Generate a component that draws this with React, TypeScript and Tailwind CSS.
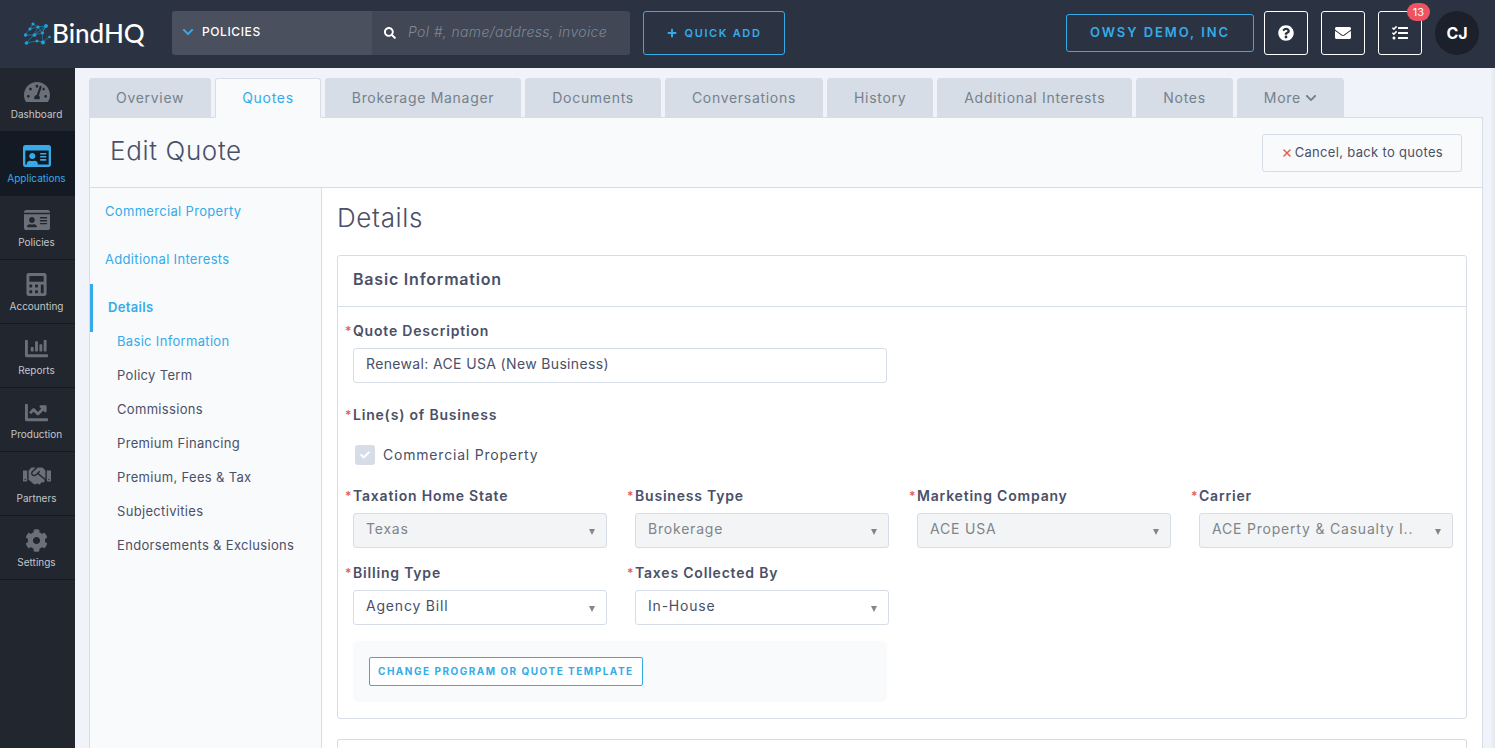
import type { ReactNode } from "react";
import { X } from "lucide-react";
import {
  FaCalculator,
  FaChartBar,
  FaChartLine,
  FaCheck,
  FaChevronDown,
  FaCog,
  FaEnvelope,
  FaHandshake,
  FaIdCard,
  FaPlus,
  FaQuestionCircle,
  FaRegIdCard,
  FaSearch,
  FaTachometerAlt,
  FaTasks,
} from "react-icons/fa";

const sideItems = [
  { label: "Dashboard", icon: FaTachometerAlt, size: "size-[26px]" },
  { label: "Applications", icon: FaRegIdCard, size: "size-7", active: true },
  { label: "Policies", icon: FaIdCard, size: "size-[26px]" },
  { label: "Accounting", icon: FaCalculator, size: "size-[23px]" },
  { label: "Reports", icon: FaChartBar, size: "size-[23px]" },
  { label: "Production", icon: FaChartLine, size: "size-[23px]" },
  { label: "Partners", icon: FaHandshake, size: "size-7" },
  { label: "Settings", icon: FaCog, size: "size-[23px]" },
];

const tabs = [
  "Overview",
  "Quotes",
  "Brokerage Manager",
  "Documents",
  "Conversations",
  "History",
  "Additional Interests",
  "Notes",
  "More",
];

const detailLinks = [
  "Basic Information",
  "Policy Term",
  "Commissions",
  "Premium Financing",
  "Premium, Fees & Tax",
  "Subjectivities",
  "Endorsements & Exclusions",
];

const selects = [
  { id: "state", label: "Taxation Home State", value: "Texas", disabled: true },
  { id: "businessType", label: "Business Type", value: "Brokerage", disabled: true },
  { id: "marketing", label: "Marketing Company", value: "ACE USA", disabled: true },
  { id: "carrier", label: "Carrier", value: "ACE Property & Casualty I..", disabled: true },
  { id: "billing", label: "Billing Type", value: "Agency Bill", disabled: false },
  { id: "taxes", label: "Taxes Collected By", value: "In-House", disabled: false },
];

const Logo = () => (
  <a href="#" className="flex w-[172px] shrink-0 items-center pl-6 text-white">
    <svg width="28" height="24" viewBox="0 0 28 24" stroke="#1ca4dc" strokeWidth="0.5" fill="#1ca4dc">
      <path
        fill="none"
        d="M1 14 6 8 9 3 14 6 22 5 18 12 10 14 1 14M2 22 10 14 14 6 18 12 19 21 13 20 2 22M6 8 14 6M10 14 22 5M18 12 22 5M19 21 25 16"
      />
      <circle cx="1.5" cy="14" r="1.5" />
      <circle cx="2.5" cy="22" r="1.5" />
      <circle cx="6" cy="8" r="1.3" />
      <circle cx="9" cy="3" r="1.3" />
      <circle cx="14" cy="6" r="1.3" />
      <circle cx="10.5" cy="14" r="1.6" />
      <circle cx="13" cy="20" r="1.2" />
      <circle cx="19" cy="21.5" r="1.8" />
      <circle cx="18.5" cy="12" r="1.3" />
      <circle cx="22" cy="5" r="1.7" />
      <circle cx="25.5" cy="16" r="1.1" />
    </svg>
    <span className="font-['Lato',sans-serif] text-[26px] leading-8 font-medium">BindHQ</span>
  </a>
);

const Header = () => (
  <header className="flex h-[68px] items-center bg-[#2b3342] pr-4 pb-0.5">
    <Logo />
    <div className="flex h-11 overflow-hidden rounded-[3px]">
      <button className="flex w-[200px] items-center gap-2 bg-[#4a505e] px-2.5 pb-0.5 text-xs font-medium tracking-wider text-white">
        <FaChevronDown className="size-3 text-[#35abe9]" />
        POLICIES
      </button>
      <div className="flex w-[258px] items-center gap-3 bg-[#414754] pl-3">
        <FaSearch className="size-3 text-white" />
        <input
          aria-label="Search"
          placeholder="Pol #, name/address, invoice"
          className="min-w-0 flex-1 bg-transparent pb-0.5 text-sm font-light tracking-wide italic outline-none placeholder:text-[#7f8794]"
        />
      </div>
    </div>
    <button className="ml-[13px] flex h-11 w-[142px] items-center justify-center gap-2 rounded-[3px] border border-[#35abe9] text-[11px] font-semibold tracking-[0.15em] text-[#35abe9]">
      <FaPlus className="size-2.5" />
      QUICK ADD
    </button>
    <div className="ml-auto flex items-center">
      <button className="h-[38px] w-[188px] rounded-[3px] border border-[#35abe9] text-[13px] font-semibold tracking-[0.15em] text-[#35abe9]">
        OWSY DEMO, INC
      </button>
      <div className="ml-2.5 flex gap-[13px]">
        <HeaderButton label="Help">
          <FaQuestionCircle />
        </HeaderButton>
        <HeaderButton label="Messages">
          <FaEnvelope />
        </HeaderButton>
        <HeaderButton label="Tasks">
          <FaTasks />
          <span className="absolute -top-[9px] -right-[9px] flex h-[18px] w-[23px] items-center justify-center rounded-full bg-[#ef5261] text-[11px]">
            13
          </span>
        </HeaderButton>
        <button className="size-11 rounded-full bg-[#1b202a] text-base font-bold text-white">CJ</button>
      </div>
    </div>
  </header>
);

const HeaderButton = ({ label, children }: { label: string; children: ReactNode }) => (
  <button
    aria-label={label}
    className="relative flex size-11 items-center justify-center rounded-[3px] border border-white text-base text-white"
  >
    {children}
  </button>
);

const Sidebar = () => (
  <nav className="w-[75px] shrink-0 bg-[#22272f]">
    {sideItems.map(({ label, icon: Icon, size, active }) => (
      <a
        key={label}
        href="#"
        className={`flex h-16 flex-col items-center border-b border-[#151b26] pt-2.5 pr-0.5 text-[10px] leading-4 ${
          active ? "bg-[#141a24] text-[#35abe9]" : "text-[#c3c6cb]"
        }`}
      >
        <span className={`flex h-7 items-center ${active ? "" : "text-[#6b6f78]"}`}>
          <Icon className={size} />
        </span>
        {label}
      </a>
    ))}
  </nav>
);

const Tabs = () => (
  <div className="flex gap-1">
    {tabs.map((tab) => (
      <a
        key={tab}
        href="#"
        className={`flex h-10 items-center gap-1 rounded-t-[3px] border px-[26px] text-sm tracking-wider whitespace-nowrap ${
          tab === "Quotes"
            ? "relative border-[#d6dde6] border-b-[#f9fafc] bg-[#f9fafc] text-[#35abe9]"
            : "border-[#d6dde6] bg-[#d6dde6] text-[#75818d]"
        }`}
      >
        {tab}
        {tab === "More" && <FaChevronDown className="size-3" />}
      </a>
    ))}
  </div>
);

const Required = () => <span className="absolute -left-2 text-xs leading-5 text-[#e2604a]">*</span>;

const QuoteNav = () => (
  <aside className="w-[232px] shrink-0 border-r border-[#d6dde6] bg-[#f9fafc] text-[13px] tracking-wide">
    <a href="#" className="flex h-12 items-center px-[15px] text-[#35abe9]">
      Commercial Property
    </a>
    <a href="#" className="flex h-12 items-center px-[15px] text-[#35abe9]">
      Additional Interests
    </a>
    <a href="#" className="flex h-12 items-center border-l-[3px] border-[#35abe9] px-[15px] font-semibold text-[#35abe9]">
      Details
    </a>
    <div className="flex flex-col gap-4 pl-[27px]">
      {detailLinks.map((link, i) => (
        <a key={link} href="#" className={`leading-[18px] ${i === 0 ? "text-[#35abe9]" : ""}`}>
          {link}
        </a>
      ))}
    </div>
  </aside>
);

const BasicInformation = () => (
  <section className="rounded-[3px] border border-[#d6dde6]">
    <h3 className="flex h-[51px] items-center border-b border-[#d6dde6] px-[15px] pb-1 text-base font-semibold">
      Basic Information
    </h3>
    <div className="pt-3.5 pr-[13px] pb-4 pl-[15px] text-sm">
      <div className="grid grid-cols-4 gap-x-7">
        <div className="col-span-2 pr-0.5">
          <label htmlFor="description" className="relative block leading-5 font-semibold">
            <Required />
            Quote Description
          </label>
          <input
            id="description"
            defaultValue="Renewal: ACE USA (New Business)"
            className="mt-[7px] h-[35px] w-full rounded-[3px] border border-[#d6dde6] px-3 pb-1 tracking-wide"
          />
        </div>
      </div>

      <fieldset className="mt-[22px]">
        <legend className="relative leading-5 font-semibold">
          <Required />
          Line(s) of Business
        </legend>
        <label className="mt-5 ml-0.5 flex items-center gap-2 leading-5">
          <span className="relative flex size-5 items-center justify-center">
            <input type="checkbox" defaultChecked disabled className="size-5 appearance-none rounded-[3px] bg-[#d6dde6]" />
            <FaCheck className="pointer-events-none absolute size-2.5 text-white" />
          </span>
          Commercial Property
        </label>
      </fieldset>

      <div className="mt-[21px] grid grid-cols-4 gap-x-7 gap-y-[15px]">
        {selects.map(({ id, label, value, disabled }) => (
          <div key={id}>
            <label htmlFor={id} className="relative block leading-5 font-semibold">
              <Required />
              {label}
            </label>
            <div className="relative mt-[7px]">
              <select
                id={id}
                disabled={disabled}
                className="block h-[35px] w-full appearance-none rounded-[3px] border border-[#d6dde6] bg-white px-3 pb-1 disabled:bg-[#f3f4f6] disabled:text-[#80848a] disabled:opacity-100"
              >
                <option>{value}</option>
              </select>
              <svg
                width="6"
                height="6"
                viewBox="0 0 6 6"
                fill="#858585"
                className="pointer-events-none absolute top-4 right-3"
              >
                <path d="M0 0h6L3 6z" />
              </svg>
            </div>
          </div>
        ))}
      </div>

      <div className="mt-4 grid grid-cols-2 gap-x-7">
        <div className="mr-0.5 rounded-md bg-[#f9fafc] p-4">
          <button className="block h-[29px] rounded-[2px] border border-[#35abe9] bg-white px-2 text-[10px] font-bold tracking-[0.15em] text-[#35abe9]">
            CHANGE PROGRAM OR QUOTE TEMPLATE
          </button>
        </div>
      </div>
    </div>
  </section>
);

const App = () => {
  return (
    <div className="flex min-h-screen flex-col font-['Inter',sans-serif] text-[#4a5068]">
      <Header />
      <div className="flex flex-1">
        <Sidebar />
        <main className="flex min-w-0 flex-1 flex-col bg-[#f0f3f9] pt-2.5 pr-3 pl-3.5 shadow-[inset_-6px_0_4px_-4px_rgba(0,0,0,0.06)]">
          <Tabs />
          <div className="-mt-px flex flex-1 flex-col border border-b-0 border-[#d6dde6] bg-[#f9fafc]">
            <div className="flex h-[70px] items-center justify-between border-b border-[#d6dde6] px-5">
              <h1 className="pb-1 text-[26px] font-light tracking-wide">Edit Quote</h1>
              <button className="flex h-[38px] items-center gap-0.5 rounded-[3px] border border-[#d6dde6] px-[18px] text-[13px] tracking-wide">
                <X className="size-3 text-[#e2604a]" strokeWidth={3} />
                Cancel, back to quotes
              </button>
            </div>
            <div className="flex flex-1">
              <QuoteNav />
              <div className="flex min-w-0 flex-1 flex-col bg-white px-[15px] tracking-wider">
                <h2 className="flex h-[67px] items-center pb-2 text-[26px] font-light tracking-wide">Details</h2>
                <BasicInformation />
                <section className="mt-5 flex-1 rounded-t-[3px] border border-b-0 border-[#d6dde6]" />
              </div>
            </div>
          </div>
        </main>
      </div>
    </div>
  );
};

export default App;
